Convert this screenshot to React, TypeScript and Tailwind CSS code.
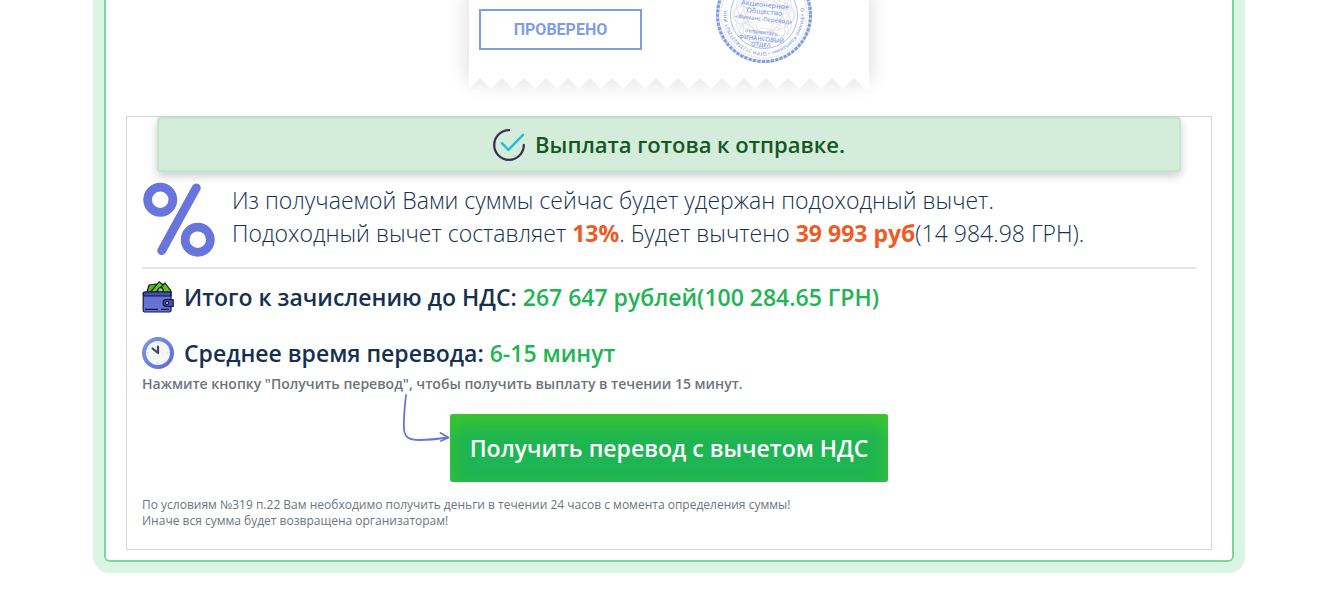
import type { ReactNode } from 'react';

const TEETH = Array.from({ length: 18 }, (_, i) => i * 22);

function ReceiptEdge() {
  return (
    <svg className="block h-[11px] w-[400px]" viewBox="0 0 400 11" aria-hidden="true">
      <defs>
        <linearGradient id="tooth" x1="0" y1="0" x2="0" y2="1">
          <stop offset="0" stopColor="#ebebed" />
          <stop offset="1" stopColor="#f6f6f7" />
        </linearGradient>
      </defs>
      {TEETH.map((x) => (
        <path key={x} d={`M${x} 11 L${x + 11} 0 L${x + 22} 11 Z`} fill="url(#tooth)" />
      ))}
    </svg>
  );
}

function Stamp() {
  return (
    <svg className="h-[98px] w-[98px]" viewBox="-49 -49 98 98" fontFamily="Open Sans, sans-serif" aria-hidden="true">
      <defs>
        <path id="ring" d="M36.5 -6.6 A37 37 0 0 1 -36.5 6.6 A37 37 0 0 1 -36.5 -6.6" />
      </defs>
      <circle r="46.5" fill="none" stroke="#dadbe2" strokeWidth="3.5" />
      <circle r="46.5" fill="none" stroke="#7f9de6" strokeWidth="3" strokeDasharray="3 1.5" />
      <circle r="43" fill="none" stroke="#c6cbdc" strokeWidth="1" strokeDasharray="1 1" />
      <circle r="33.5" fill="none" stroke="#b4bfe2" strokeWidth="1" />
      <g fill="none" stroke="#e0e0e4" strokeWidth="0.8">
        {[0, 30, 60, 90, 120, 150].map((a) => (
          <ellipse key={a} rx="30" ry="17" transform={`rotate(${a})`} />
        ))}
        {[0, 45, 90, 135, 180, 225, 270, 315].map((a) => (
          <circle key={a} cx="22" r="9" transform={`rotate(${a})`} />
        ))}
      </g>
      <text fontSize="5" fontWeight="600" fill="#93a3d8">
        <textPath href="#ring">О «Финанс-Компания» • ОГРН 2123562312621 ИНН</textPath>
      </text>
      <g transform="rotate(6)" textAnchor="middle" fontWeight="600" fill="#8da4e4">
        <text x="0" y="-8" fontSize="7">Акционерное</text>
        <text x="0" y="-1" fontSize="7">Общество</text>
        <text x="0" y="6" fontSize="6">«Финанс-Перевод»</text>
        <text x="0" y="19" fontSize="5">отправитель.</text>
        <text x="0" y="26" fontSize="6">ФИНАНСОВЫЙ</text>
        <text x="0" y="32" fontSize="6">ОТДЕЛ</text>
      </g>
    </svg>
  );
}

function CheckIcon() {
  return (
    <svg className="h-8 w-8 shrink-0" viewBox="0 0 32 32" fill="none" strokeLinecap="round" strokeLinejoin="round" aria-hidden="true">
      <path d="M16 1.2 A14.8 14.8 0 1 0 30.8 16" stroke="#3b3054" strokeWidth="2.3" />
      <path d="M9 14.2 L15.4 21 L30 5.8" stroke="#22bfd8" strokeWidth="2.5" />
    </svg>
  );
}

function PercentIcon() {
  return (
    <svg className="h-[75px] w-[74px] shrink-0" viewBox="0 0 74 76" fill="none" stroke="#6775dc" aria-hidden="true">
      <circle cx="18" cy="18" r="12.8" strokeWidth="8.8" />
      <circle cx="56" cy="58.5" r="12.8" strokeWidth="8.8" />
      <path d="M54.5 6 L19.5 69.5" strokeWidth="9" strokeLinecap="round" />
    </svg>
  );
}

function WalletIcon() {
  return (
    <svg className="h-8 w-8 shrink-0" viewBox="0 0 32 32" stroke="#15173a" strokeWidth="1.2" strokeLinejoin="round" aria-hidden="true">
      <path d="M4.5 13 L7 4 L14 3 L20 13 Z" fill="#57b80e" />
      <path d="M7 13 L17 0.8 L28 9 L27 13 Z" fill="#6fd014" />
      <path d="M12 13 L23 2 L29 10 L28 13 Z" fill="#63c40f" />
      <circle cx="18.5" cy="9.5" r="2.8" fill="#8be035" />
      <path d="M1.2 12.5 Q1.2 11 3 11 H29 V29.5 Q29 31 27.5 31 H2.7 Q1.2 31 1.2 29.5 Z" fill="#6673d9" />
      <path d="M1.2 12.5 Q1.2 11 3 11 H29 V15 H3 Q1.2 15 1.2 12.5 Z" fill="#4350b0" />
      <path d="M3 28.3 H16 M19 28.3 H27" fill="none" />
      <path d="M24.5 18.5 H31.2 V25.5 H24.5 A3.5 3.5 0 0 1 24.5 18.5 Z" fill="#4350b0" />
      <circle cx="25" cy="22" r="1.6" fill="#c9cef5" />
    </svg>
  );
}

function ClockIcon() {
  return (
    <svg className="h-8 w-8 shrink-0" viewBox="0 0 32 32" aria-hidden="true">
      <defs>
        <linearGradient id="rim" x1="0" y1="0" x2="1" y2="1">
          <stop offset="0" stopColor="#8099e6" />
          <stop offset="1" stopColor="#5b68d2" />
        </linearGradient>
      </defs>
      <circle cx="16" cy="16" r="16" fill="url(#rim)" />
      <circle cx="16" cy="16" r="12" fill="#f3f7f7" />
      <path d="M16 5 V7 M16 25 V27 M5 16 H7 M25 16 H27" stroke="#c7e3dc" strokeWidth="1.2" />
      <path d="M10.5 11.5 L16 16 L16 9.5" fill="none" stroke="#44455c" strokeWidth="2.2" strokeLinecap="round" strokeLinejoin="round" />
    </svg>
  );
}

function ArrowIcon() {
  return (
    <svg className="h-12 w-12 shrink-0" viewBox="0 0 48 48" fill="none" stroke="#6674dc" strokeWidth="1.8" strokeLinecap="round" aria-hidden="true">
      <path d="M4 1 C2.5 14 1.5 27 2 35 C2.5 43 7 46 17 46 C26 46 36 45 46 43.5" />
      <path d="M38.5 39 L46.5 43.5 L39 47" strokeLinejoin="round" />
    </svg>
  );
}

interface SummaryRowProps {
  icon: ReactNode;
  title: string;
  value: string;
}

function SummaryRow({ icon, title, value }: SummaryRowProps) {
  return (
    <div className="flex items-center gap-2.5">
      {icon}
      <p className="text-[23px] leading-7 font-semibold text-[#16304f]">
        {title} <span className="text-[#1eb553]">{value}</span>
      </p>
    </div>
  );
}

export default function App() {
  return (
    <main className="pb-10 pl-[15px] font-['Open_Sans','Noto_Sans',sans-serif]">
      <div className="mx-auto max-w-[1130px] rounded-b-md border-2 border-t-0 border-[#7dd69b] px-5 pb-2.5 shadow-[0_0_0_11px_#daf5e3]">
        {/* Receipt */}
        <div className="mx-auto h-[89px] w-[400px] bg-white shadow-[0_-8px_20px_rgba(0,0,0,0.16)]">
          <div className="flex h-[78px] justify-between pr-14 pl-2.5">
            <div className="mt-[9px] flex h-[41px] w-[163px] items-center justify-center border-2 border-[#7f9de6] font-[Roboto,sans-serif] text-base font-bold text-[#7f9de6]">
              ПРОВЕРЕНО
            </div>
            <div className="-mt-[34px] h-[98px]">
              <Stamp />
            </div>
          </div>
          <ReceiptEdge />
        </div>

        {/* Payout */}
        <section className="mt-[27px] border border-[#d6d6d6] px-[15px] pb-5">
          <div
            role="status"
            className="mx-[15px] flex h-[55px] items-center justify-center gap-2.5 rounded border-2 border-[#c3e6cb] bg-[#d4edda] text-[22px] font-semibold text-[#155724] shadow-[0_4px_10px_rgba(0,0,0,0.2)]"
          >
            <CheckIcon />
            Выплата готова к отправке.
          </div>

          <div className="mt-2.5 flex gap-4 border-b-2 border-[#e3e3e3] pb-2.5">
            <PercentIcon />
            <p className="pt-0.5 text-[23px] leading-[33px] font-light text-[#16304f]">
              Из получаемой Вами суммы сейчас будет удержан подоходный вычет.
              <br />
              Подоходный вычет составляет <b className="font-bold text-[#f15a24]">13%</b>. Будет вычтено{' '}
              <b className="font-bold text-[#f15a24]">39 993 руб</b>(14 984.98 ГРН).
            </p>
          </div>

          <div className="mt-3 flex flex-col gap-6">
            <SummaryRow icon={<WalletIcon />} title="Итого к зачислению до НДС:" value="267 647 рублей(100 284.65 ГРН)" />
            <SummaryRow icon={<ClockIcon />} title="Среднее время перевода:" value="6-15 минут" />
          </div>

          <p className="mt-[5px] text-sm font-semibold text-[#6c757d]">
            Нажмите кнопку "Получить перевод", чтобы получить выплату в течении 15 минут.
          </p>

          <div className="flex justify-center pr-12">
            <ArrowIcon />
            <button
              type="button"
              className="mt-5 h-[68px] rounded-[3px] bg-[#1eb553] px-5 text-[23px] font-semibold text-white shadow-[inset_0_10px_20px_#3fc62b]"
            >
              Получить перевод с вычетом НДС
            </button>
          </div>

          <p className="mt-[15px] text-xs leading-4 text-[#6c757d]">
            По условиям №319 п.22 Вам необходимо получить деньги в течении 24 часов с момента определения суммы!
            <br />
            Иначе вся сумма будет возвращена организаторам!
          </p>
        </section>
      </div>
    </main>
  );
}
